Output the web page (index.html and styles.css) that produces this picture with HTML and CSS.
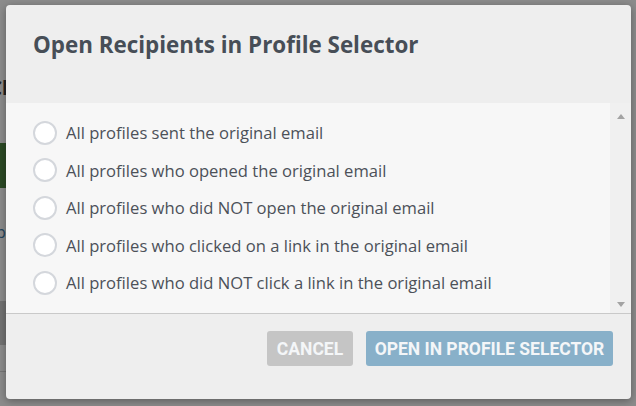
FILE: index.html
```html
<!DOCTYPE html>
<html>
<head>
<meta charset="utf-8">
<link rel="stylesheet" href="styles.css">
</head>
<body>
<div class="page">
  <div class="page-title">Cl</div>
  <div class="page-green"></div>
  <div class="page-link">pi</div>
  <div class="page-dark"></div>
  <div class="page-line"></div>
</div>
<div class="modal">
  <div class="modal-header">
    <h2 class="modal-title">Open Recipients in Profile Selector</h2>
  </div>
  <div class="modal-body">
    <ul class="options">
      <li class="option"><span class="radio"></span><span class="label">All profiles sent the original email</span></li>
      <li class="option"><span class="radio"></span><span class="label">All profiles who opened the original email</span></li>
      <li class="option"><span class="radio"></span><span class="label">All profiles who did NOT open the original email</span></li>
      <li class="option"><span class="radio"></span><span class="label">All profiles who clicked on a link in the original email</span></li>
      <li class="option"><span class="radio"></span><span class="label">All profiles who did NOT click a link in the original email</span></li>
    </ul>
    <div class="scrollbar">
      <span class="arrow arrow-up"></span>
      <span class="arrow arrow-down"></span>
    </div>
  </div>
  <div class="modal-footer">
    <button class="btn btn-cancel">Cancel</button>
    <button class="btn btn-primary">Open in Profile Selector</button>
  </div>
</div>
</body>
</html>
```
FILE: styles.css
```css
html, body {
  margin: 0;
  padding: 0;
  width: 636px;
  height: 406px;
  overflow: hidden;
  background: #8c8c8c;
}
.page {
  display: flex;
  flex-direction: column;
  width: 7px;
  height: 406px;
  overflow: hidden;
}
.page-title {
  margin-top: 76px;
  height: 24px;
  font-family: "Open Sans", sans-serif;
  font-weight: 700;
  font-size: 19px;
  line-height: 24px;
  color: #222;
  margin-left: -10px;
  white-space: nowrap;
}
.page-green {
  margin-top: 43px;
  height: 45px;
  background: #2c4a25;
}
.page-link {
  margin-top: 32px;
  height: 24px;
  margin-left: -4px;
  font-family: "Open Sans", sans-serif;
  font-size: 16px;
  line-height: 24px;
  color: #22455e;
  white-space: nowrap;
}
.page-dark {
  margin-top: 57px;
  height: 44px;
  background: #737373;
}
.page-line {
  margin-top: 26px;
  height: 1px;
  background: #767676;
}
.modal {
  position: absolute;
  left: 6px;
  top: 5px;
  width: 625px;
  height: 394px;
  background: #eeeeee;
  border-radius: 4px;
  box-shadow: 0 2px 8px rgba(0,0,0,0.35);
  display: flex;
  flex-direction: column;
  overflow: hidden;
  font-family: "Open Sans", sans-serif;
}
.modal-header {
  height: 98px;
  box-sizing: border-box;
  padding: 25px 27px 0;
}
.modal-title {
  margin: 0;
  font-size: 22.4px;
  line-height: 30px;
  font-weight: 700;
  color: #474e57;
}
.modal-body {
  height: 211px;
  box-sizing: border-box;
  display: flex;
  background: #f7f7f7;
  border-bottom: 1px solid #c9c9c9;
}
.options {
  flex: 1;
  list-style: none;
  margin: 0;
  padding: 11px 0 0 27px;
}
.option {
  display: flex;
  align-items: center;
  gap: 9px;
  height: 37.5px;
}
.radio {
  width: 20px;
  height: 20px;
  border: 2px solid #d4d7dc;
  border-radius: 50%;
  background: #ffffff;
  flex: none;
}
.label {
  font-size: 16.6px;
  color: #4c5159;
}
.scrollbar {
  width: 21px;
  background: #f0f0f0;
  display: flex;
  flex-direction: column;
  justify-content: space-between;
  align-items: center;
  padding: 11px 0 6px;
  box-sizing: border-box;
}
.arrow {
  width: 0;
  height: 0;
  border-left: 4px solid transparent;
  border-right: 4px solid transparent;
}
.arrow-up {
  border-bottom: 5px solid #a3a3a3;
}
.arrow-down {
  border-top: 5px solid #a3a3a3;
}
.modal-footer {
  flex: 1;
  display: flex;
  justify-content: flex-end;
  align-items: flex-start;
  gap: 13px;
  padding: 17px 18px 0 0;
}
.btn {
  height: 35px;
  border: none;
  border-radius: 3px;
  font-family: Roboto, sans-serif;
  font-weight: 700;
  font-size: 17.5px;
  text-transform: uppercase;
  color: #f4f6f8;
  padding: 0;
}
.btn-cancel {
  width: 86px;
  background: #c5c5c5;
}
.btn-primary {
  width: 247px;
  background: #88b0c9;
}
```
